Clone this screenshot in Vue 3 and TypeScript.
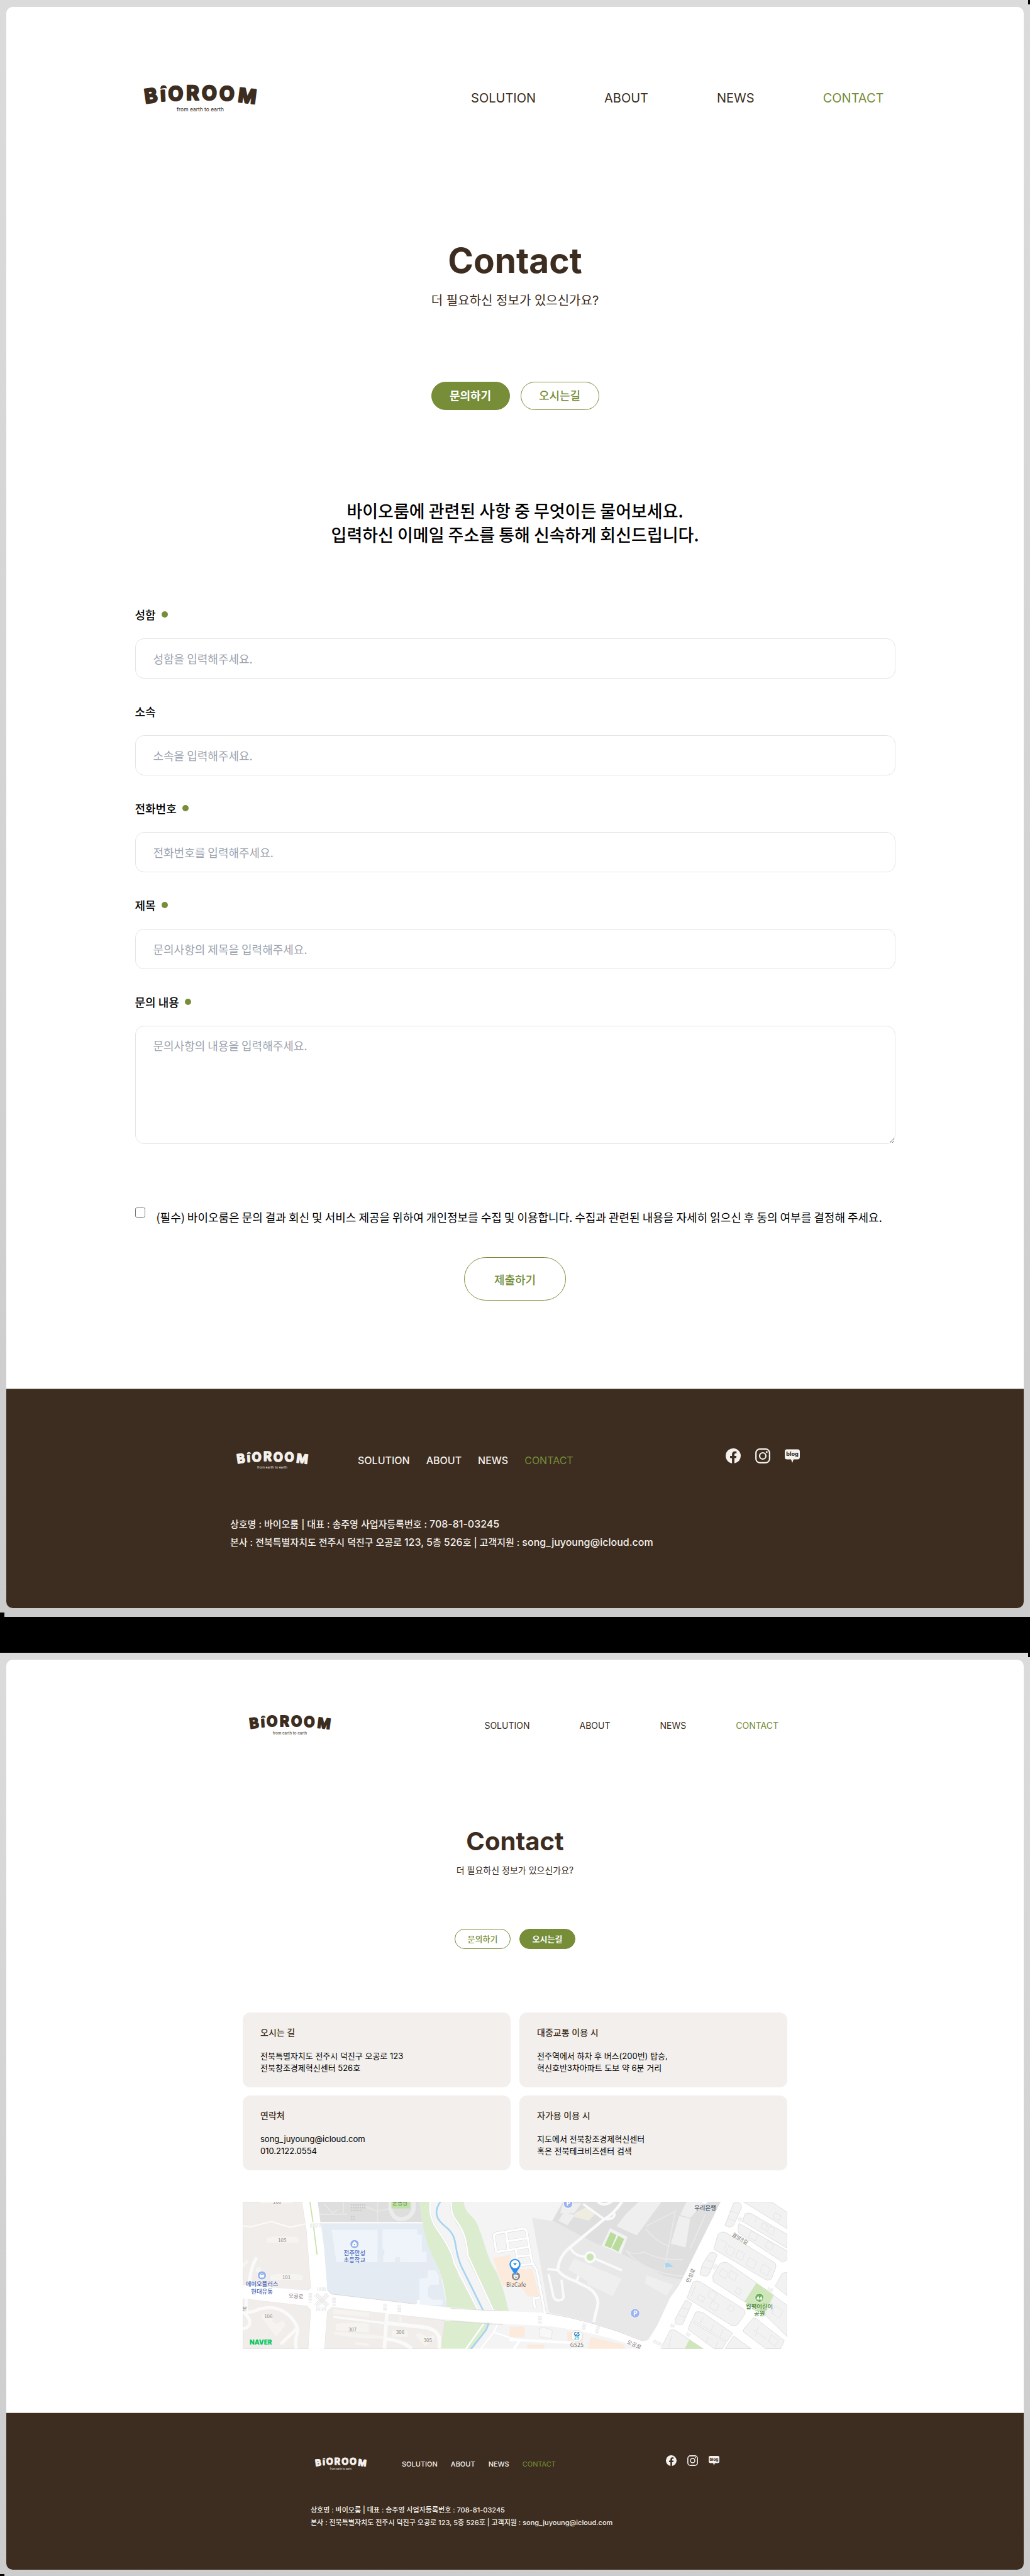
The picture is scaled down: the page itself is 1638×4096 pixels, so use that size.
<script setup lang="ts">
import { ref } from 'vue'

type ViewName = 'inquiry' | 'directions'

interface Field {
  id: string
  label: string
  placeholder: string
  required: boolean
}

const views: { name: ViewName; size: string }[] = [
  { name: 'inquiry', size: 'large' },
  { name: 'directions', size: 'compact' },
]

const menu = ['SOLUTION', 'ABOUT', 'NEWS', 'CONTACT']
const tabs: { name: ViewName; label: string }[] = [
  { name: 'inquiry', label: '문의하기' },
  { name: 'directions', label: '오시는길' },
]

// Wordmark letters, set along a shallow arch
const letters = [
  { glyph: 'B', x: 68, y: 170, turn: -8 },
  { glyph: 'ı', x: 151, y: 157, turn: -3 },
  { glyph: 'O', x: 192, y: 154, turn: 0 },
  { glyph: 'R', x: 291, y: 150, turn: 0 },
  { glyph: 'O', x: 376, y: 152, turn: 0 },
  { glyph: 'O', x: 472, y: 155, turn: 0 },
  { glyph: 'M', x: 570, y: 161, turn: 7 },
]

const fields: Field[] = [
  { id: 'name', label: '성함', placeholder: '성함을 입력해주세요.', required: true },
  { id: 'company', label: '소속', placeholder: '소속을 입력해주세요.', required: false },
  { id: 'phone', label: '전화번호', placeholder: '전화번호를 입력해주세요.', required: true },
  { id: 'subject', label: '제목', placeholder: '문의사항의 제목을 입력해주세요.', required: true },
]

const cards = [
  { title: '오시는 길', lines: ['전북특별자치도 전주시 덕진구 오공로 123', '전북창조경제혁신센터 526호'] },
  { title: '대중교통 이용 시', lines: ['전주역에서 하차 후 버스(200번) 탑승,', '혁신호반3차아파트 도보 약 6분 거리'] },
  { title: '연락처', lines: ['song_juyoung@icloud.com', '010.2122.0554'] },
  { title: '자가용 이용 시', lines: ['지도에서 전북창조경제혁신센터', '혹은 전북테크비즈센터 검색'] },
]

const agreed = ref(false)

// City blocks east of 만성로
const blocks = [
  'M1215 55Q1260 42 1258 80L1215 175Q1195 195 1168 175Z',
  'M1268 48H1420L1506 105V195Z',
  'M1275 115Q1295 105 1310 112L1506 225V300L1265 155Z',
  'M1245 165L1506 315V362L1480 375L1240 215Q1235 190 1245 165Z',
  'M1130 225Q1150 205 1175 215L1440 380Q1450 395 1440 415L1420 465Q1400 480 1380 465L1108 305Z',
  'M1085 325Q1105 315 1127 335L1080 445Q1060 460 1032 440L1045 390Z',
  'M1140 385Q1160 370 1185 380L1340 488L1275 590L1105 480L1102 450Z',
  'M1480 435L1506 430V558L1440 505Z',
  'M1432 555L1506 610V780L1385 660Z',
  'M995 485Q1015 470 1040 485L1270 630Q1285 650 1270 665L1240 710Q1225 725 1205 718L962 570Z',
  'M955 580L988 600L940 710Q920 720 897 705L900 680Z',
  'M1010 645Q1030 640 1050 650L1210 760L1180 805L990 690Z',
  'M985 695L1175 810L1155 844H1110L968 740Z',
  'M1320 680Q1340 675 1360 700L1490 800L1470 844H1390L1270 755L1268 740Z',
  'M870 745Q885 738 900 745L1050 844H820Z',
  'M1215 775L1310 844H1170Z',
]

// House outlines inside the blocks
const houses = [
  'M1192 95L1235 110M1180 135L1220 152M1330 160L1345 128M1375 160l25 15 -12 28 -25 -15zM1410 180l30 16 -14 32 -28 -16z',
  'M1440 105l34 20 -14 26 -32 -18zM1310 205l38 22 -16 34 -36 -22zM1400 262l34 20 -16 30 -32 -20z',
  'M1140 250l40 20 -20 38M1190 285l34 20 -18 40 -34 -22zM1240 310l34 20 -14 36 -34 -20zM1300 350l40 24 -18 40 -40 -24zM1375 385l40 26 -18 38 -38 -24z',
  'M1060 360L1110 375M1045 400L1095 415M1150 410l36 22 -16 34 -34 -22zM1200 420l36 22 -16 34 -32 -20zM1235 512l24 14 -12 26 -24 -14z',
  'M1010 500L985 560M1030 550l30 18 -12 24 -32 -18zM1090 525l36 22 -18 36 -34 -22zM1100 585l36 22 -16 34 -36 -20zM1195 605l26 16 -12 26 -28 -16z',
  'M930 620L975 635M915 660L958 675M1050 675L1035 710M1110 710L1090 750M1160 740L1140 780M1080 780L1060 820M1130 805L1115 844',
  'M1320 740L1390 790M1350 720L1330 780M1420 770l40 30 -20 30 -36 -26zM1440 610l44 30 -22 40 -40 -30zM880 770L860 844',
]
</script>

<template>
  <main class="board">
    <section v-for="view in views" :key="view.name" class="window" :class="view.size">
      <div class="page">
        <header class="top">
          <a href="#" class="logo" aria-label="BiOROOM">
            <svg viewBox="60 62 614 158">
              <text
                v-for="(letter, index) in letters"
                :key="index"
                class="logo-letter"
                :x="letter.x"
                :y="letter.y"
                :transform="`rotate(${letter.turn} ${letter.x} ${letter.y})`"
              >{{ letter.glyph }}</text>
              <path d="M149 91Q150 72 166 71Q182 71 185 88Q168 82 149 91Z" fill="currentColor" />
              <text class="logo-line" x="367" y="214" text-anchor="middle">from earth to earth</text>
            </svg>
          </a>
          <nav class="menu">
            <a v-for="item in menu" :key="item" href="#" :class="{ active: item === 'CONTACT' }">{{ item }}</a>
          </nav>
        </header>

        <div class="hero">
          <h1>Contact</h1>
          <p>더 필요하신 정보가 있으신가요?</p>
          <div class="tabs">
            <button v-for="tab in tabs" :key="tab.name" type="button" :class="{ on: tab.name === view.name }">
              {{ tab.label }}
            </button>
          </div>
        </div>

        <form v-if="view.name === 'inquiry'" class="inquiry" @submit.prevent>
          <h2>바이오룸에 관련된 사항 중 무엇이든 물어보세요.<br />입력하신 이메일 주소를 통해 신속하게 회신드립니다.</h2>
          <div class="fields">
            <div v-for="field in fields" :key="field.id" class="field">
              <label :for="field.id">{{ field.label }}<i v-if="field.required" class="dot"></i></label>
              <input :id="field.id" type="text" :placeholder="field.placeholder" />
            </div>
            <div class="field">
              <label for="message">문의 내용<i class="dot"></i></label>
              <textarea id="message" placeholder="문의사항의 내용을 입력해주세요."></textarea>
            </div>
          </div>
          <div class="agree">
            <input id="agree" v-model="agreed" type="checkbox" />
            <label for="agree">(필수) 바이오룸은 문의 결과 회신 및 서비스 제공을 위하여 개인정보를 수집 및 이용합니다. 수집과 관련된 내용을 자세히 읽으신 후 동의 여부를 결정해 주세요.</label>
          </div>
          <button type="submit" class="submit">제출하기</button>
        </form>

        <div v-else class="directions">
          <div class="cards">
            <article v-for="card in cards" :key="card.title" class="card">
              <h3>{{ card.title }}</h3>
              <p v-for="line in card.lines" :key="line">{{ line }}</p>
            </article>
          </div>

          <svg class="map" viewBox="54 48 2952 796" role="img" aria-label="오시는 길 지도">
            <rect x="54" y="48" width="2952" height="796" fill="#f4f4f4" />
            <!-- apartment blocks, west -->
            <path d="M54 48H376L400 200L424 515L400 532L54 500ZM54 572L405 612L424 635L410 844H54Z" fill="#f0edea" stroke="#dedad6" stroke-width="2" />
            <g fill="none" stroke="#fafafa" stroke-width="8">
              <path d="M54 178L95 184L208 155L310 186L394 168" />
              <path d="M54 645Q110 650 140 630Q250 600 320 680Q360 730 350 760Q335 800 345 844" stroke-width="18" />
              <path d="M60 650Q100 680 90 715Q80 735 54 735M352 730L260 820M72 560V640M130 350Q95 400 90 500" stroke-width="18" />
            </g>
            <path
              d="M185 245L215 236H330L358 242V270H185ZM205 445L235 440H355L378 448V472H205ZM158 655Q200 650 215 665V695L235 710L275 690L288 715L235 780L160 680ZM150 48H325V56H150ZM54 380L75 360L88 375L54 405ZM125 410L150 400L155 430H125Z"
              fill="#f6f4f0"
            />
            <!-- park with playground -->
            <path d="M460 48H1012L1028 158H472Z" fill="#dedede" />
            <g fill="none" stroke="#e7e7e7" stroke-width="7">
              <path d="M470 115H620M785 48V155M495 60L540 108L570 90M720 75L785 100L850 85M600 48V110" />
              <path d="M855 48V90Q870 140 907 142Q965 140 980 90V48" stroke="#ececec" stroke-width="22" />
              <path d="M640 65H720M640 80H720M640 95H700M640 128H662M640 142H662" stroke="#c9c9c9" stroke-dasharray="8 4" />
            </g>
            <path d="M860 48H961V84H860Z" fill="#bfe0a6" />
            <text class="map-text" x="907" y="64" text-anchor="middle" font-size="30" fill="#4f8048">운동장</text>
            <!-- school -->
            <path d="M480 165H1030L1060 280L1125 440L1160 618L1000 602L535 548L512 525L495 300Z" fill="#e4ebf3" />
            <path
              d="M535 200H785V375H562ZM812 197H1000V225H1025V318H1050V375H907V348H880V375H815V340L822 330V305H812ZM1058 420H1100L1117 450V497H1070L1058 515V560L1080 578H1137V607H1040L1012 600V465L1055 460Z"
              fill="#eff4fa"
            />
            <path d="M472 161H1080" stroke="#fafafa" stroke-width="8" />
            <!-- stream -->
            <path d="M1012 48H1068V100Q1075 150 1110 200Q1200 340 1220 440L1325 632L1160 618Q1150 480 1110 400L1060 290Q1030 200 1012 48Z" fill="#dcedcf" />
            <path d="M1185 48H1252C1260 120 1310 120 1330 180C1370 280 1380 360 1430 430C1470 520 1480 580 1497 642L1410 632L1280 370C1260 300 1270 250 1230 190C1190 140 1180 100 1185 48Z" fill="#dcedcf" />
            <path d="M1150 692L1400 708L1360 760L1290 844H1128Z" fill="#dcedcf" />
            <g fill="none" stroke-linecap="round">
              <g stroke="#dfdfdf" stroke-width="11">
                <path d="M1070 40V100Q1075 150 1110 200Q1190 310 1200 380L1330 636" />
                <path d="M1185 40Q1180 100 1200 135C1250 200 1265 240 1275 340L1412 636" />
              </g>
              <g stroke="#fff" stroke-width="8">
                <path d="M1070 40V100Q1075 150 1110 200Q1190 310 1200 380L1330 636" />
                <path d="M1185 40Q1180 100 1200 135C1250 200 1265 240 1275 340L1412 636" />
                <path d="M1360 710L1265 844M1435 712L1415 755L1345 844M1415 755L1535 795" />
              </g>
              <path d="M1125 48C1090 100 1100 140 1150 180C1230 240 1190 290 1240 400L1357 636M1385 706Q1380 740 1360 760L1290 848" stroke="#a5d3f2" stroke-width="9" />
            </g>
            <!-- apartments, south -->
            <path d="M512 640L535 618L835 652L1150 692L1128 844H496Z" fill="#f0edea" stroke="#dedad6" stroke-width="2" />
            <g fill="none" stroke="#fafafa" stroke-width="20">
              <path d="M836 645L822 844M835 705L1040 728Q1110 740 1120 790V844M825 790Q920 800 970 844" />
              <path d="M545 672L820 705" stroke-width="12" />
            </g>
            <path
              d="M542 630L740 650V672L545 655ZM558 710L600 704H720L738 715V755L558 745ZM553 752L820 775V790L700 788L553 768ZM862 745H945L950 780H862ZM990 768L1005 758L1060 780L1085 770L1100 785L1040 832ZM902 670H915V700H902ZM665 808L740 818V830L665 822Z"
              fill="#f6f4f0"
            />
            <!-- business centre -->
            <path d="M1410 352L1505 335L1515 415L1625 412L1662 558L1598 562L1560 505L1462 502ZM1500 725H1583V782H1500Z" fill="#fcebdd" />
            <g fill="none" stroke-linejoin="round">
              <path d="M1428 318L1416 235Q1416 222 1430 218L1572 194Q1588 192 1592 205L1622 375L1648 420L1692 652M1430 320L1610 292M1482 215L1494 308M1490 262L1595 245M1535 310L1548 392L1625 385M1540 345L1610 338M1665 565L1630 572L1638 625" stroke="#dcdcdc" stroke-width="16" />
              <path d="M1428 318L1416 235Q1416 222 1430 218L1572 194Q1588 192 1592 205L1622 375L1648 420L1692 652M1430 320L1610 292M1482 215L1494 308M1490 262L1595 245M1535 310L1548 392L1625 385M1540 345L1610 338M1665 565L1630 572L1638 625" stroke="#fff" stroke-width="12" />
            </g>
            <!-- office park -->
            <path d="M1623 135L1730 152L1790 48H2650L2420 500L2360 600L2300 720L2250 795L2230 803Q1950 690 1715 650Z" fill="#e8e8e8" />
            <path d="M1790 48H2650L2435 470L2340 450L2110 330L1960 270L1735 150Z" fill="#dfdfdf" />
            <path
              d="M2130 115L2200 48H2325L2190 230L2080 180ZM2420 125L2480 140L2455 295L2375 275ZM2425 120L2460 48H2560L2480 135ZM1850 355L2108 465L2060 560L1920 495L1925 480L1818 415ZM2240 445L2390 500L2350 558L2235 490ZM1795 105L1855 120L1815 175L1765 150ZM1790 60L1890 55L1850 110L1775 110Z"
              fill="#efefef"
            />
            <path d="M1855 110L1920 75L1968 110L1930 150L1850 130Z" fill="#efede2" />
            <g fill="none" stroke="#e9e9e9" stroke-width="6">
              <path d="M2240 195Q2300 270 2370 290M2130 310Q2160 340 2230 320Q2320 370 2440 360M2130 310Q2200 400 2340 435Q2400 450 2440 450M2400 90L2340 410M2240 180L2400 100M2560 120Q2500 260 2480 300" />
            </g>
            <g fill="none" stroke="#fafafa" stroke-width="16">
              <path d="M2110 48Q2060 120 2010 145L1840 285Q1765 340 1762 420Q1790 455 1850 475L1930 515Q1980 550 1980 600L1957 700" />
              <path d="M1900 60L2010 140Q2070 150 2070 110M1975 44Q2010 80 2060 44M1825 292Q1855 345 1910 345M1960 355L2110 420M1705 412L1765 418M1865 475L1875 450" stroke-width="13" />
              <path d="M1712 440L1738 560Q1745 585 1770 582Q1795 580 1793 560L1782 470" stroke-width="13" />
            </g>
            <circle cx="1937" cy="348" r="26" fill="#c9e4b2" stroke="#fafafa" stroke-width="13" />
            <path d="M2045 190L2140 238L2105 332L2000 287Z" fill="#f2f2f2" />
            <path d="M2048 212L2080 228L2050 300L2015 285ZM2090 232L2122 250L2090 318L2055 300Z" fill="#b9dc9c" />
            <path d="M2345 378L2365 380L2388 400L2345 404Z" fill="#a5d6f3" />
            <!-- city blocks, east -->
            <path d="M2645 48H3006V844H2225L2230 803L2255 797L2300 720L2370 570L2420 500Z" fill="#fff" />
            <g transform="translate(1500)">
              <path v-for="block in blocks" :key="block" :d="block" fill="#f2f2f2" stroke="#dddbd8" stroke-width="3" />
              <path d="M1340 488L1432 552L1380 660L1275 590ZM975 795L1050 844H950Z" fill="#cfe6bb" />
              <path v-for="house in houses" :key="house" :d="house" fill="none" stroke="#e2e2e2" stroke-width="3" />
            </g>
            <!-- main roads -->
            <path d="M1812 752L1900 762V808H1815ZM1940 780L2020 800L2115 820L2130 844H1925ZM1595 822H1690V844H1595Z" fill="#fcebdd" />
            <path d="M1500 795L1900 815M1560 795L1525 844" stroke="#fff" stroke-width="14" fill="none" />
            <path d="M1662 735L1685 728L1732 745L1728 790L1665 780Z" fill="#f8f8f8" stroke="#e2e2e2" stroke-width="3" />
            <path
              d="M54 500L430 530L535 548L1000 602V580H1012V604L1200 625L1400 638L1500 642L1700 650Q1950 690 2230 803L2262 797L2330 844H2215Q2000 760 1720 722L1500 712L1200 690L940 665L535 618L405 612L54 572Z"
              fill="#fff"
            />
            <path d="M376 48H460L495 300L512 525L535 548V620L512 640L496 844H410L424 635L405 612V532L424 515L400 200Z" fill="#fff" />
            <path d="M1180 625L1400 638H1465M1180 694L1400 710L1465 715M512 525L535 548L990 602M1700 652Q1950 690 2225 803" fill="none" stroke="#d4d4d4" stroke-width="3" />
            <path d="M418 48L435 158M438 182L457 335" stroke="#c5e5a8" stroke-width="6" />
            <g fill="none" stroke="#ebebeb" stroke-dasharray="5 3">
              <path d="M418 178L478 174" stroke-width="24" />
              <path d="M458 522H508M452 630H508" stroke-width="20" />
              <path d="M420 542V598M549 568V612M825 600V640M903 608V648M1665 668V710" stroke-width="20" />
              <path d="M450 550L515 612M515 550L450 612" stroke-width="26" />
              <path d="M1908 708L1900 742M1982 722L1972 762M2280 803L2325 822" stroke-width="20" />
              <path d="M2605 410L2625 390M2740 140L2765 150M2375 715L2395 725M2900 520L2930 530M2460 760L2480 775" stroke-width="22" />
            </g>
            <!-- labels -->
            <g class="map-text" text-anchor="middle">
              <g fill="#8e8983" font-size="27">
                <text x="240" y="58">100</text>
                <text x="268" y="267">105</text>
                <text x="291" y="468">101</text>
                <text x="193" y="679">106</text>
                <text x="649" y="751">307</text>
                <text x="908" y="763">306</text>
                <text x="1057" y="808">305</text>
              </g>
              <g fill="#4d68ba" font-size="32" font-weight="500">
                <text x="660" y="337">전주만성</text>
                <text x="660" y="375">초등학교</text>
                <text x="158" y="505">에이오플러스</text>
                <text x="158" y="545">현대유통</text>
              </g>
              <g fill="#77736f" font-size="29">
                <text x="342" y="570" transform="rotate(4 342 570)">오공로</text>
                <text x="2492" y="452" transform="rotate(-65 2492 452)">만성로</text>
                <text x="2745" y="256" transform="rotate(30 2745 256)">월방8길</text>
                <text x="2172" y="832" transform="rotate(24 2172 832)">오공로</text>
                <text x="64" y="638">븐</text>
              </g>
              <text x="2561" y="91" fill="#46536c" font-size="32" font-weight="500">우리은행</text>
              <text x="1536" y="508" fill="#6f6a66" font-size="31">BizCafe</text>
              <text x="1865" y="837" fill="#6f6a66" font-size="30">GS25</text>
              <g fill="#4a8740" font-size="32" font-weight="500">
                <text x="2855" y="626">월평어린이</text>
                <text x="2855" y="665">공원</text>
              </g>
              <text class="naver" x="152" y="822">NAVER</text>
            </g>
            <!-- markers -->
            <g stroke="#fff" stroke-width="3">
              <circle cx="660" cy="277" r="24" fill="#94afe9" />
              <circle cx="158" cy="447" r="24" fill="#94afe9" />
              <circle cx="1818" cy="58" r="25" fill="#9db2ee" />
              <circle cx="2181" cy="652" r="25" fill="#9db2ee" />
              <circle cx="2855" cy="568" r="24" fill="#6cb158" />
              <circle cx="1535" cy="451" r="24" fill="#8b8580" />
              <circle cx="1865" cy="775" r="31" fill="#fff" stroke="#d6d6d6" />
              <circle cx="2558" cy="40" r="20" fill="#fff" stroke="#e6e6e6" />
            </g>
            <path d="M648 274L660 262L672 274V289H648ZM144 444H172L168 459H148ZM2838 577L2848 556L2857 577ZM2856 577L2864 558L2873 577ZM2846 577H2850V584H2846ZM2862 577H2866V584H2862ZM1522 446Q1535 440 1548 446V456Q1545 466 1535 467Q1525 466 1522 456Z" fill="#fff" />
            <path d="M150 444Q158 428 166 444" fill="none" stroke="#fff" stroke-width="3" />
            <path d="M1528 451H1533M1539 451H1544M1530 458Q1535 463 1541 458" stroke="#8b8580" stroke-width="3" fill="none" />
            <circle cx="660" cy="280" r="4" fill="#94afe9" />
            <g class="map-text" text-anchor="middle" font-weight="700">
              <text x="1819" y="70" fill="#fff" font-size="34">P</text>
              <text x="2182" y="664" fill="#fff" font-size="34">P</text>
              <text x="1865" y="773" fill="#1876b5" font-size="24">GS</text>
              <text x="1865" y="794" fill="#28b4dc" font-size="24">25</text>
            </g>
            <path d="M1530 447L1505 406A31 31 0 1 1 1555 406Z" fill="#2f8ff0" stroke="#fff" stroke-width="2" />
            <circle cx="1530" cy="386" r="22" fill="#fff" />
            <path d="M1519 380H1541L1530 393Z" fill="#2f8ff0" />
          </svg>
        </div>

        <footer class="bottom">
          <div class="bottom-inner">
            <div class="bottom-row">
              <a href="#" class="logo" aria-label="BiOROOM">
                <svg viewBox="60 62 614 158">
                  <text
                    v-for="(letter, index) in letters"
                    :key="index"
                    class="logo-letter"
                    :x="letter.x"
                    :y="letter.y"
                    :transform="`rotate(${letter.turn} ${letter.x} ${letter.y})`"
                  >{{ letter.glyph }}</text>
                  <path d="M149 91Q150 72 166 71Q182 71 185 88Q168 82 149 91Z" fill="currentColor" />
                  <text class="logo-line" x="367" y="214" text-anchor="middle">from earth to earth</text>
                </svg>
              </a>
              <nav class="menu">
                <a v-for="item in menu" :key="item" href="#" :class="{ active: item === 'CONTACT' }">{{ item }}</a>
              </nav>
              <div class="social">
                <a href="#" aria-label="Facebook">
                  <svg viewBox="0 0 24 24">
                    <path
                      fill="currentColor"
                      d="M24 12A12 12 0 1 0 10.100 23.850V15.500H7.100V12H10.100V9.400C10.100 6.400 11.900 4.700 14.600 4.700C15.900 4.700 17.300 4.950 17.300 4.950V7.900H15.800C14.300 7.900 13.900 8.800 13.900 9.750V12H17.200L16.650 15.500H13.900V23.850A12 12 0 0 0 24 12Z"
                    />
                  </svg>
                </a>
                <a href="#" aria-label="Instagram">
                  <svg viewBox="0 0 24 24">
                    <g fill="none" stroke="currentColor" stroke-width="2.200">
                      <rect x="1.200" y="1.200" width="21.600" height="21.600" rx="6" />
                      <circle cx="12" cy="12" r="5" />
                    </g>
                    <circle cx="18.300" cy="5.700" r="1.500" fill="currentColor" />
                  </svg>
                </a>
                <a href="#" aria-label="Blog">
                  <svg viewBox="0 0 24 24">
                    <path
                      fill="currentColor"
                      d="M3.500 1.500H20.500Q24 1.500 24 5V14Q24 17.500 20.500 17.500H14L12 23L10 17.500H3.500Q0 17.500 0 14V5Q0 1.500 3.500 1.500Z"
                    />
                    <text class="blog-word" x="12" y="12" text-anchor="middle">blog</text>
                  </svg>
                </a>
              </div>
            </div>
            <p>상호명 : 바이오룸 | 대표 : 송주영 사업자등록번호 : <span>708-81-03245</span></p>
            <p>본사 : 전북특별자치도 전주시 덕진구 오공로 <span>123, 5</span>층 <span>526</span>호 | 고객지원 : <span>song_juyoung@icloud.com</span></p>
          </div>
        </footer>
      </div>
    </section>
  </main>
</template>

<style>
body {
  margin: 0;
  background: #000;
}
</style>

<style scoped>
* {
  box-sizing: border-box;
}

.board {
  display: flex;
  flex-direction: column;
  gap: 57px;
  background: #000;
  font-family: Inter, 'Noto Sans CJK KR', sans-serif;
  color: #000;
}

h1,
h2,
h3,
p {
  margin: 0;
}

a {
  color: inherit;
  text-decoration: none;
}

button {
  font-family: inherit;
  line-height: 1;
  cursor: pointer;
}

.window {
  position: relative;
  padding: 11px 10px 14px;
  background: linear-gradient(#dbdbdb, #cccccc);
}

.window::before,
.window::after {
  content: '';
  position: absolute;
  width: 3px;
  height: 7px;
  background: #000;
}

.window::before {
  top: 0;
  right: 0;
}

.window::after {
  bottom: 0;
  left: 0;
  width: 7px;
}

.page {
  display: flow-root;
  border-radius: 10px;
  overflow: hidden;
  background: #fff;
}

.large {
  --content: 1209px;
  --top-space: 122px;
  --top-height: 46px;
  --top-inset: 0 18px 0 14px;
  --logo-width: 179px;
  --menu-size: 20px;
  --menu-gap: 109px;
  --title-space: 202px;
  --title-size: 55px;
  --title-line: 66px;
  --lead-space: 16px;
  --lead-size: 20px;
  --lead-line: 30px;
  --tabs-space: 114px;
  --tabs-gap: 17px;
  --tab-width: 125px;
  --tab-height: 45px;
  --tab-size: 18px;
  --foot-space: 140px;
  --foot-width: 906px;
  --foot-padding: 94px 0 90px;
  --foot-row: 38px;
  --foot-inset: 10px;
  --foot-logo: 114px;
  --foot-menu-start: 79px;
  --foot-menu-size: 16px;
  --foot-menu-gap: 26px;
  --icon-size: 24px;
  --icon-gap: 23px;
  --foot-text-space: 68px;
  --foot-text-size: 15px;
  --foot-latin-size: 16px;
  --foot-text-line: 29px;
  --foot-edge: #75695c;
}

.compact {
  padding-bottom: 10px;
  --content: 866px;
  --top-space: 87px;
  --top-height: 34px;
  --top-inset: 0 14px 0 10px;
  --logo-width: 130px;
  --menu-size: 14px;
  --menu-gap: 79px;
  --title-space: 144px;
  --title-size: 40px;
  --title-line: 48px;
  --lead-space: 11px;
  --lead-size: 14px;
  --lead-line: 22px;
  --tabs-space: 82px;
  --tabs-gap: 14px;
  --tab-width: 89px;
  --tab-height: 32px;
  --tab-size: 13px;
  --foot-space: 101px;
  --foot-width: 650px;
  --foot-padding: 67px 0 65px;
  --foot-row: 28px;
  --foot-inset: 7px;
  --foot-logo: 82px;
  --foot-menu-start: 56px;
  --foot-menu-size: 11px;
  --foot-menu-gap: 21px;
  --icon-size: 17px;
  --icon-gap: 17px;
  --foot-text-space: 49px;
  --foot-text-size: 11px;
  --foot-latin-size: 11px;
  --foot-text-line: 20px;
  --foot-edge: #cdc3b8;
}

.compact::after {
  height: 3px;
}

.top {
  display: flex;
  align-items: center;
  justify-content: space-between;
  max-width: var(--content);
  height: var(--top-height);
  margin: var(--top-space) auto 0;
  padding: var(--top-inset);
  color: #3c2d20;
}

.logo {
  display: block;
  width: var(--logo-width);
}

.logo svg {
  display: block;
  width: 100%;
  height: auto;
  overflow: visible;
}

.logo-letter {
  fill: currentColor;
  stroke: currentColor;
  stroke-width: 9px;
  stroke-linejoin: round;
  font-size: 106px;
  font-weight: 700;
}

.logo-line {
  fill: currentColor;
  font-size: 29px;
}

.blog-word {
  fill: #3c2d20;
  font-size: 9px;
  font-weight: 800;
}

.menu {
  display: flex;
  gap: var(--menu-gap);
  font-size: var(--menu-size);
}

.menu .active {
  color: #768d37;
}

.hero {
  margin-top: var(--title-space);
  text-align: center;
  color: #3c2d20;
}

.hero h1 {
  font-size: var(--title-size);
  line-height: var(--title-line);
  font-weight: 700;
}

.hero p {
  margin-top: var(--lead-space);
  font-size: var(--lead-size);
  line-height: var(--lead-line);
}

.tabs {
  display: flex;
  justify-content: center;
  gap: var(--tabs-gap);
  margin-top: var(--tabs-space);
}

.tabs button {
  width: var(--tab-width);
  height: var(--tab-height);
  padding: 0;
  border: 1px solid #778d38;
  border-radius: 24px;
  background: #fff;
  color: #778d38;
  font-size: var(--tab-size);
  font-weight: 500;
}

.tabs .on {
  background: #778d38;
  color: #fff;
  font-weight: 700;
}

.inquiry,
.directions {
  max-width: var(--content);
  margin: 0 auto;
}

.inquiry {
  margin-top: 141px;
  font-family: 'Noto Sans CJK KR', Inter, sans-serif;
}

.inquiry h2 {
  font-size: 27px;
  line-height: 38px;
  font-weight: 500;
  text-align: center;
}

.fields {
  display: flex;
  flex-direction: column;
  gap: 39px;
  margin-top: 95px;
}

.field {
  display: flex;
  flex-direction: column;
  gap: 25px;
}

.field label {
  display: flex;
  align-items: center;
  gap: 9px;
  font-size: 18px;
  line-height: 26px;
  font-weight: 500;
}

.dot {
  width: 10px;
  height: 10px;
  border-radius: 50%;
  background: #778d38;
}

.field input,
.field textarea {
  display: block;
  width: 100%;
  height: 64px;
  padding: 0 28px;
  border: 1px solid #e5e5e5;
  border-radius: 14px;
  background: #fff;
  font-family: inherit;
  font-size: 18px;
}

.field textarea {
  height: 188px;
  padding-top: 16px;
  line-height: 28px;
}

.field ::placeholder {
  color: #9ca3af;
}

.agree {
  display: flex;
  align-items: flex-start;
  gap: 18px;
  margin-top: 101px;
  font-size: 18px;
  line-height: 30px;
}

.agree input {
  flex: none;
  width: 16px;
  height: 16px;
  margin: 0;
}

.submit {
  display: block;
  width: 162px;
  height: 69px;
  margin: 49px auto 0;
  border: 1px solid #778d38;
  border-radius: 35px;
  background: #fff;
  color: #778d38;
  font-size: 18px;
  font-weight: 500;
}

.directions {
  margin-top: 101px;
}

.cards {
  display: grid;
  grid-template-columns: 1fr 1fr;
  gap: 13px 14px;
}

.card {
  padding: 22px 28px 21px;
  border-radius: 12px;
  background: #f2efec;
  font-size: 13px;
  line-height: 19px;
}

.card h3 {
  margin-bottom: 18px;
  font-size: 14px;
  line-height: 20px;
  font-weight: 500;
  color: #3c2d20;
}

.map {
  display: block;
  width: 100%;
  margin-top: 50px;
}

.map-text {
  font-family: 'Noto Sans CJK KR', sans-serif;
}

.naver {
  fill: #03c75a;
  font-family: Inter, sans-serif;
  font-size: 34px;
  font-weight: 900;
}

.bottom {
  margin-top: var(--foot-space);
  padding: var(--foot-padding);
  border-top: 1px solid var(--foot-edge);
  background: #3c2d20;
  color: #f4f0ec;
}

.bottom-inner {
  max-width: var(--foot-width);
  margin: 0 auto;
}

.bottom-row {
  display: flex;
  align-items: center;
  height: var(--foot-row);
  margin-bottom: var(--foot-text-space);
  padding-left: var(--foot-inset);
}

.bottom .logo {
  width: var(--foot-logo);
}

.bottom .menu {
  gap: var(--foot-menu-gap);
  margin-left: var(--foot-menu-start);
  font-size: var(--foot-menu-size);
  font-weight: 500;
}

.bottom .active {
  font-weight: 400;
}

.social {
  display: flex;
  gap: var(--icon-gap);
  align-self: flex-start;
  margin-left: auto;
}

.social svg {
  display: block;
  width: var(--icon-size);
  height: var(--icon-size);
}

.bottom p {
  font-size: var(--foot-text-size);
  line-height: var(--foot-text-line);
  font-weight: 500;
}

.bottom span {
  font-size: var(--foot-latin-size);
}
</style>
